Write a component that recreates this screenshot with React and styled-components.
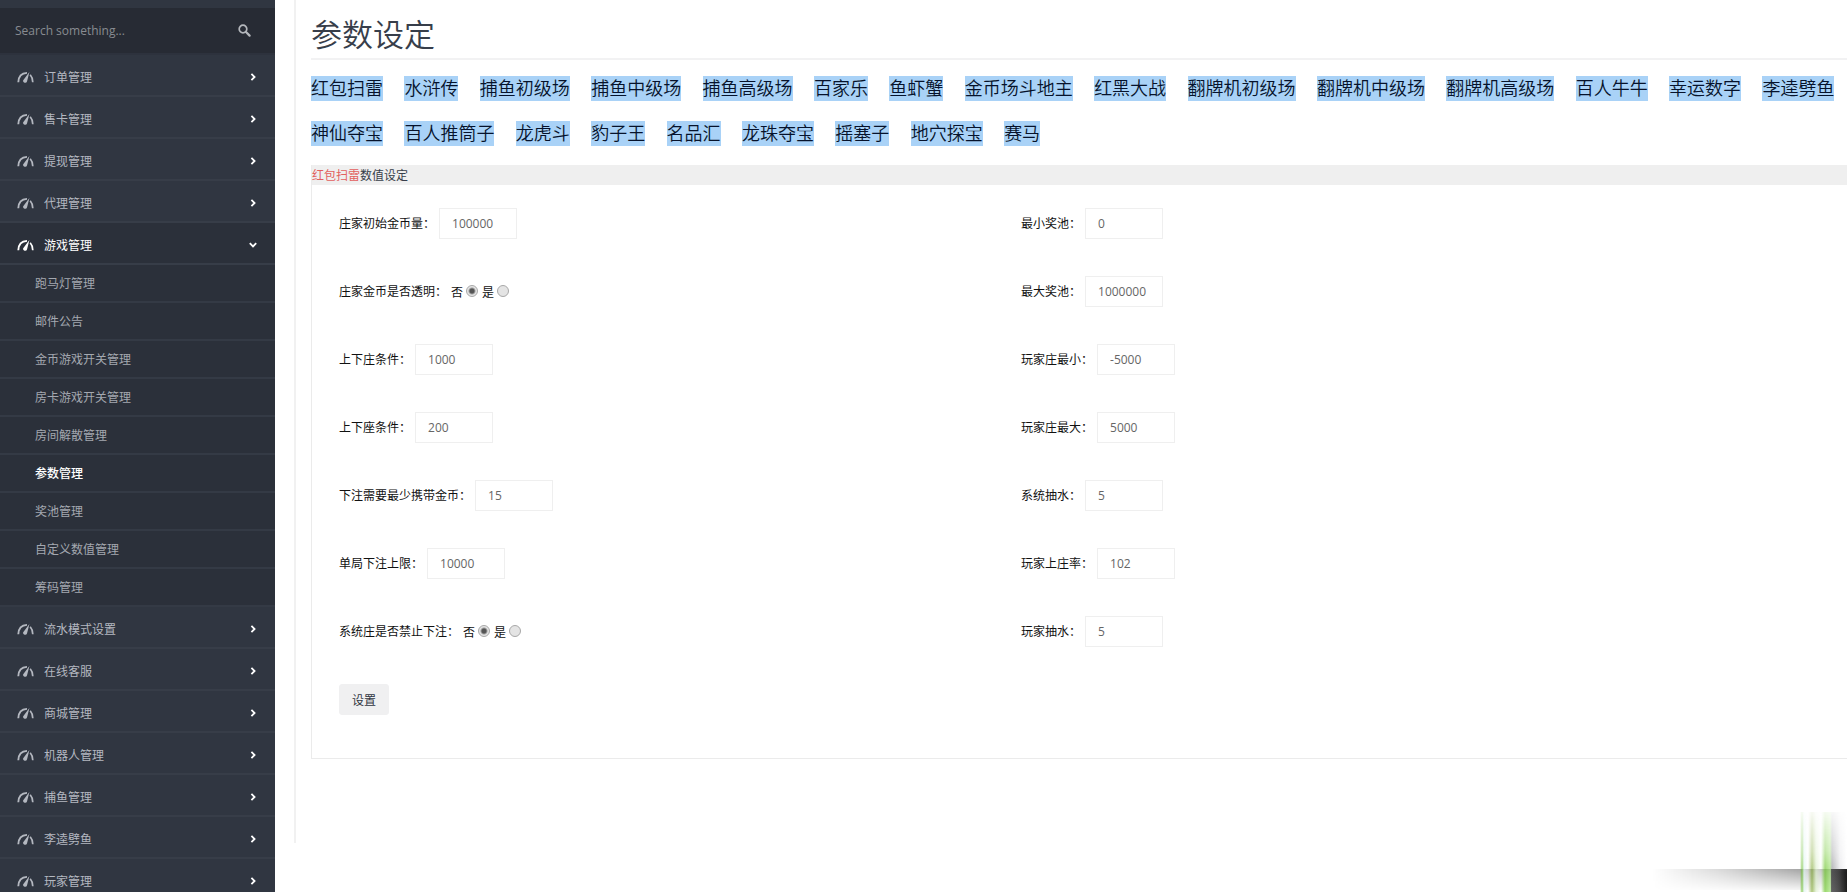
import React, { useState } from "react";
import styled, { createGlobalStyle, css } from "styled-components";

const GlobalStyle = createGlobalStyle`
  * {
    box-sizing: border-box;
  }

  body {
    margin: 0;
    background: #fff;
    color: #111;
    font-family: "Open Sans", "Noto Sans CJK SC", sans-serif;
    font-size: 12px;
    line-height: 18px;
  }

  input,
  button {
    font-family: inherit;
    font-size: 12px;
  }
`;

const subMenu = [
  "跑马灯管理",
  "邮件公告",
  "金币游戏开关管理",
  "房卡游戏开关管理",
  "房间解散管理",
  "参数管理",
  "奖池管理",
  "自定义数值管理",
  "筹码管理",
];

const menu = [
  { title: "订单管理" },
  { title: "售卡管理" },
  { title: "提现管理" },
  { title: "代理管理" },
  { title: "游戏管理", children: subMenu },
  { title: "流水模式设置" },
  { title: "在线客服" },
  { title: "商城管理" },
  { title: "机器人管理" },
  { title: "捕鱼管理" },
  { title: "李逵劈鱼" },
  { title: "玩家管理" },
];

const games = [
  "红包扫雷",
  "水浒传",
  "捕鱼初级场",
  "捕鱼中级场",
  "捕鱼高级场",
  "百家乐",
  "鱼虾蟹",
  "金币场斗地主",
  "红黑大战",
  "翻牌机初级场",
  "翻牌机中级场",
  "翻牌机高级场",
  "百人牛牛",
  "幸运数字",
  "李逵劈鱼",
  "神仙夺宝",
  "百人推筒子",
  "龙虎斗",
  "豹子王",
  "名品汇",
  "龙珠夺宝",
  "摇塞子",
  "地穴探宝",
  "赛马",
];

/* left / right fields, row by row */
const fields = [
  { name: "initGold", label: "庄家初始金币量", value: "100000" },
  { name: "minPool", label: "最小奖池", value: "0" },
  { name: "goldVisible", label: "庄家金币是否透明", radio: true },
  { name: "maxPool", label: "最大奖池", value: "1000000" },
  { name: "bankerLimit", label: "上下庄条件", value: "1000" },
  { name: "playerMin", label: "玩家庄最小", value: "-5000" },
  { name: "seatLimit", label: "上下座条件", value: "200" },
  { name: "playerMax", label: "玩家庄最大", value: "5000" },
  { name: "minCarry", label: "下注需要最少携带金币", value: "15" },
  { name: "systemTax", label: "系统抽水", value: "5" },
  { name: "maxBet", label: "单局下注上限", value: "10000" },
  { name: "bankerRate", label: "玩家上庄率", value: "102" },
  { name: "banBet", label: "系统庄是否禁止下注", radio: true },
  { name: "playerTax", label: "玩家抽水", value: "5" },
];

const GaugeIcon = () => (
  <svg width="17" height="12" viewBox="0 0 17 12" fill="none" stroke="currentColor">
    <path d="M1.3 11.2C1.5 5.6 4.8 2.2 10 1.9" strokeWidth="1.9" />
    <path d="M12.4 1L10 10.4A1.9 1.9 0 0 1 6.2 9.2Z" fill="currentColor" stroke="none" />
    <path d="M13.2 3.8C14.8 5.6 15.7 8 15.8 11.2" strokeWidth="1.7" />
  </svg>
);

const SearchIcon = () => (
  <svg width="13" height="13" viewBox="0 0 13 13" fill="none" stroke="currentColor">
    <circle cx="5" cy="5" r="3.8" strokeWidth="1.7" />
    <path d="M8 8L11.6 11.6" strokeWidth="2.2" strokeLinecap="round" />
  </svg>
);

const Chevron = ({ open }) => (
  <svg width="8" height="8" viewBox="0 0 8 8" fill="none" stroke="#fff" strokeWidth="1.8">
    <path d={open ? "M0.8 2.2L4 5.4L7.2 2.2" : "M2.4 0.8L5.6 4L2.4 7.2"} />
  </svg>
);

const Sidebar = () => {
  const [opened, setOpened] = useState("游戏管理");

  return (
    <SidebarContainer>
      <SearchForm onSubmit={(e) => e.preventDefault()}>
        <input type="text" placeholder="Search something..." aria-label="Search" />
        <button type="submit" aria-label="Search">
          <SearchIcon />
        </button>
      </SearchForm>
      <nav>
        <MenuList>
          {menu.map((item) => {
            const open = opened === item.title;
            return (
              <li key={item.title}>
                <MenuButton
                  type="button"
                  $open={open}
                  onClick={() => setOpened(open ? "" : item.title)}
                >
                  <GaugeIcon />
                  <span>{item.title}</span>
                  <Chevron open={open} />
                </MenuButton>
                {open && item.children && (
                  <MenuList>
                    {item.children.map((sub) => (
                      <li key={sub}>
                        <SubLink href="#" $active={sub === "参数管理"}>
                          {sub}
                        </SubLink>
                      </li>
                    ))}
                  </MenuList>
                )}
              </li>
            );
          })}
        </MenuList>
      </nav>
    </SidebarContainer>
  );
};

const Field = ({ field }) => {
  if (field.radio) {
    return (
      <FieldSet role="radiogroup" aria-label={field.label}>
        <span>{field.label}：</span>
        <RadioLabel>
          否
          <Radio name={field.name} value="0" defaultChecked />
        </RadioLabel>
        <RadioLabel>
          是
          <Radio name={field.name} value="1" />
        </RadioLabel>
      </FieldSet>
    );
  }
  return (
    <FieldSet>
      <label htmlFor={field.name}>{field.label}：</label>
      <TextInput id={field.name} name={field.name} defaultValue={field.value} />
    </FieldSet>
  );
};

const App = () => {
  return (
    <Page>
      <GlobalStyle />
      <Sidebar />
      <Main>
        <Title>参数设定</Title>
        <GameList>
          {games.map((game) => (
            <React.Fragment key={game}>
              <a href="#">{game}</a>{" "}
            </React.Fragment>
          ))}
        </GameList>
        <Panel>
          <PanelHead>
            <em>红包扫雷</em>数值设定
          </PanelHead>
          <PanelForm onSubmit={(e) => e.preventDefault()}>
            {fields.map((field) => (
              <Field key={field.name} field={field} />
            ))}
            <SubmitButton type="submit">设置</SubmitButton>
          </PanelForm>
        </Panel>
      </Main>
      <CornerGlow aria-hidden="true" />
    </Page>
  );
};

const Page = styled.div`
  display: flex;
  align-items: flex-start;
  height: 100vh;
  overflow: hidden;
`;

const SidebarContainer = styled.aside`
  flex: none;
  width: 275px;
  height: 100%;
  padding-top: 8px;
  overflow-y: auto;
  scrollbar-width: none;
  background: #303641;
`;

const SearchForm = styled.form`
  display: flex;
  align-items: center;
  height: 47px;
  padding: 0 24px 0 15px;
  background: #272b34;
  border-bottom: 2px solid #2d323d;

  & input {
    flex: 1;
    min-width: 0;
    padding: 0;
    border: 0;
    outline: 0;
    background: none;
    color: #aaabae;

    &::placeholder {
      color: #888b91;
      opacity: 1;
    }
  }

  & button {
    display: flex;
    padding: 0;
    border: 0;
    background: none;
    color: #b4b7bc;
  }
`;

const MenuList = styled.ul`
  margin: 0;
  padding: 0;
  list-style: none;
`;

const MenuButton = styled.button`
  display: flex;
  align-items: center;
  width: 100%;
  height: 42px;
  padding: 3px 18px 0 17px;
  border: 0;
  border-bottom: 2px solid #373d48;
  background: ${({ $open }) => ($open ? "#2b303a" : "#303641")};
  color: ${({ $open }) => ($open ? "#fff" : "#b4b8c0")};
  text-align: left;
  cursor: pointer;

  & span {
    flex: 1;
    margin-left: 10px;
  }
`;

const SubLink = styled.a`
  display: flex;
  align-items: center;
  height: 38px;
  padding: 2px 0 0 35px;
  border-bottom: 2px solid #343a45;
  background: #2b303a;
  color: #a4a8b0;
  text-decoration: none;

  ${({ $active }) =>
    $active &&
    css`
      color: #fff;
      font-weight: 500;
    `}
`;

const Main = styled.main`
  flex: 1;
  min-width: 0;
  margin-left: 19px;
  padding: 8px 0 84px 15px;
  border-left: 2px solid #f1f1f1;
`;

const Title = styled.h1`
  margin: 0;
  height: 52px;
  border-bottom: 2px solid #f2f2f3;
  color: #373e4a;
  font-size: 31px;
  font-weight: 350;
  line-height: 52px;
`;

const GameList = styled.div`
  margin-left: -18px;
  padding: 8px 0 7px;
  font-size: 13px;
  line-height: 45px;

  & a {
    display: inline-block;
    margin-left: 18px;
    background: #a9d2f7;
    color: #06122b;
    font-size: 18px;
    font-weight: 350;
    line-height: 25px;
    text-decoration: none;
  }
`;

const Panel = styled.section`
  border: 1px solid #ebebeb;
  border-width: 0 0 1px 1px;
`;

const PanelHead = styled.header`
  height: 20px;
  background: #efefef;
  color: #373e4a;
  line-height: 22px;

  & em {
    color: #e2605e;
    font-style: normal;
  }
`;

const PanelForm = styled.form`
  display: grid;
  grid-template-columns: 1fr 1fr;
  row-gap: 37px;
  padding: 23px 144px 43px 27px;
`;

const FieldSet = styled.div`
  display: flex;
  align-items: center;
  gap: 4px;
  height: 31px;
  color: #111;
`;

const TextInput = styled.input.attrs({ type: "text" })`
  width: 78px;
  height: 31px;
  padding: 0 12px;
  border: 1px solid #efefef;
  outline: 0;
  background: #fff;
  color: #666;
`;

const RadioLabel = styled.label`
  display: flex;
  align-items: center;
  gap: 3px;
  padding-top: 3px;
`;

const Radio = styled.input.attrs({ type: "radio" })`
  appearance: none;
  width: 12px;
  height: 12px;
  margin: 0 0 4px;
  border: 1px solid #a8a8a8;
  border-radius: 50%;
  background: #e4e4e4;

  &:checked {
    background: radial-gradient(circle, #555 0 2px, #e4e4e4 4px);
  }
`;

const SubmitButton = styled.button`
  justify-self: start;
  height: 31px;
  padding: 0 12px;
  border: 1px solid #f0f0f1;
  border-radius: 3px;
  background: #f0f0f1;
  color: #303641;
  cursor: pointer;
`;

/* light streaks fading into the bottom right corner */
const CornerGlow = styled.div`
  position: fixed;
  right: 0;
  bottom: 0;
  width: 195px;
  height: 80px;
  pointer-events: none;

  &::before {
    content: "";
    position: absolute;
    right: 0;
    bottom: 2px;
    width: 100%;
    height: 21px;
    background: linear-gradient(
      to right,
      rgba(0, 0, 0, 0),
      rgba(0, 0, 0, 0.15) 35%,
      rgba(0, 0, 0, 0.35) 75%,
      rgba(0, 0, 0, 0.5)
    );
    mask-image: linear-gradient(#000, rgba(0, 0, 0, 0.1));
  }

  &::after {
    content: "";
    position: absolute;
    right: 0;
    bottom: 0;
    width: 47px;
    height: 100%;
    background:
      linear-gradient(to right, rgba(20, 20, 20, 0.5), #1c1c1c) right bottom / 16px 23px no-repeat,
      linear-gradient(
        to right,
        transparent 0,
        rgba(110, 190, 50, 0.7) 2px,
        rgba(225, 245, 240, 0.8) 4px,
        rgba(255, 255, 255, 0.5) 8px,
        rgba(140, 175, 70, 0.7) 12px,
        rgba(225, 240, 210, 0.8) 16px,
        rgba(255, 255, 255, 0.5) 21px,
        rgba(130, 205, 75, 0.8) 25px,
        rgba(170, 230, 130, 0.8) 30px,
        rgba(150, 150, 155, 0.7) 32px,
        rgba(220, 220, 225, 0.5) 40px,
        rgba(255, 255, 255, 0) 47px
      );
    mask-image: linear-gradient(rgba(0, 0, 0, 0.1), rgba(0, 0, 0, 0.6) 50%, #000 75%);
  }
`;

export default App;
